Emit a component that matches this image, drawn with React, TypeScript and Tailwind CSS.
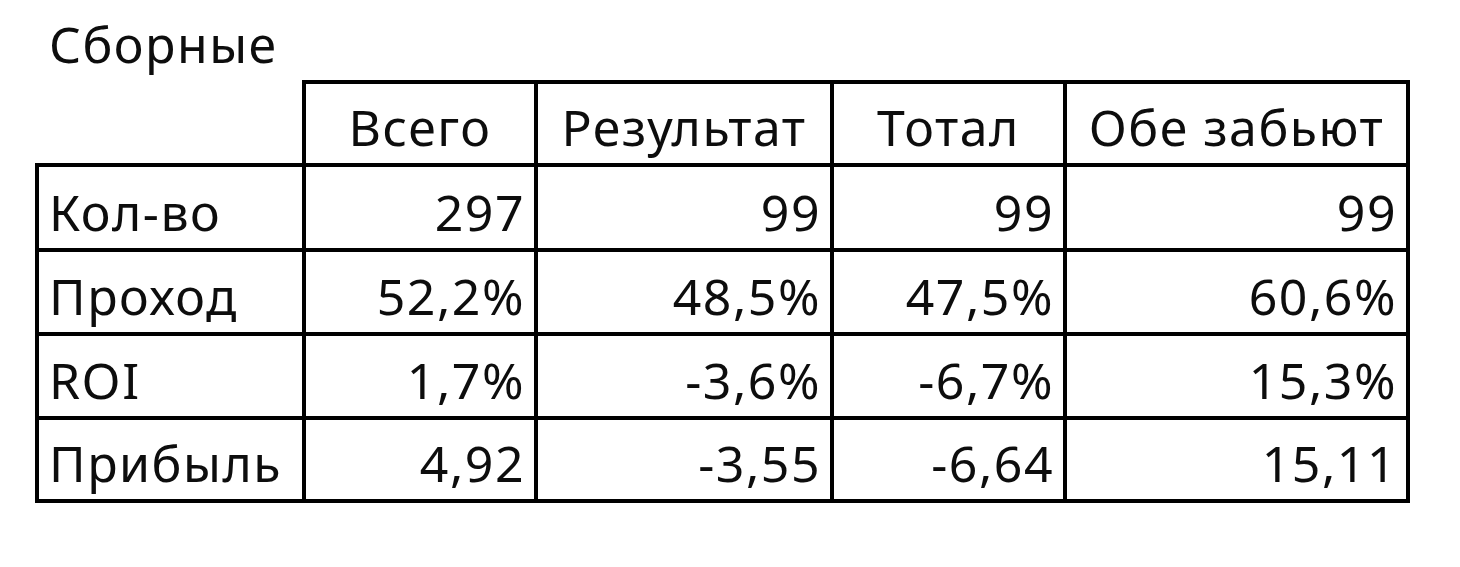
import React from 'react';

type Row = { label: string; values: string[] };

const headers = ['Всего', 'Результат', 'Тотал', 'Обе забьют'];

const rows: Row[] = [
  { label: 'Кол-во', values: ['297', '99', '99', '99'] },
  { label: 'Проход', values: ['52,2%', '48,5%', '47,5%', '60,6%'] },
  { label: 'ROI', values: ['1,7%', '-3,6%', '-6,7%', '15,3%'] },
  { label: 'Прибыль', values: ['4,92', '-3,55', '-6,64', '15,11'] },
];

const App: React.FC = () => {
  return (
    <div
      className="min-h-screen bg-white pl-[35px] pt-[19px] text-[50px] leading-none tracking-[1.5px] text-[#0d0d0d]"
      style={{ fontFamily: '"Noto Sans", "Open Sans", sans-serif' }}
    >
      {/* Title cell above the table */}
      <div className="pl-[14px]">Сборные</div>

      <div className="mt-[11px] grid w-max grid-cols-[271px_232px_296px_233px_343px] grid-rows-[87px_85px_84px_84px_83px]">
        {/* Header row */}
        <div className="border-r-4 border-b-4 border-black" />
        {headers.map(h => (
          <div
            key={h}
            className="flex items-end justify-center border-t-4 border-r-4 border-b-4 border-black pb-[11px]"
          >
            {h}
          </div>
        ))}

        {/* Data rows */}
        {rows.map(row => (
          <React.Fragment key={row.label}>
            <div className="flex items-end border-l-4 border-r-4 border-b-4 border-black pl-[10px] pb-[11px]">
              {row.label}
            </div>
            {row.values.map((v, i) => (
              <div
                key={i}
                className="flex items-end justify-end border-r-4 border-b-4 border-black pr-[9px] pb-[11px]"
              >
                {v}
              </div>
            ))}
          </React.Fragment>
        ))}
      </div>
    </div>
  );
};

export default App;
